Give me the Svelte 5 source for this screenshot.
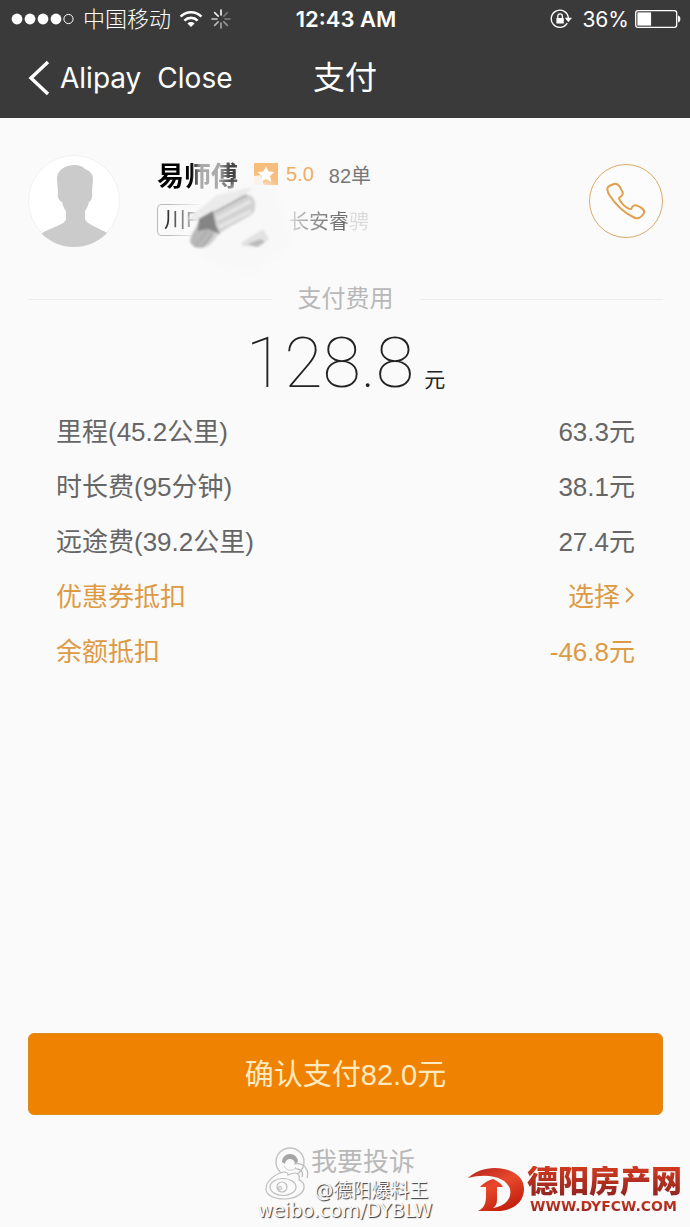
<script lang="ts">
  const carrier = '中国移动';
  const time = '12:43 AM';
  const battery = 36;

  const driver = {
    name: '易师傅',
    rating: '5.0',
    orders: '82单',
    plate: '川F',
    car: '长安睿骋'
  };

  const total = '128.8';
  const fees = [
    { label: '里程(45.2公里)', value: '63.3元' },
    { label: '时长费(95分钟)', value: '38.1元' },
    { label: '远途费(39.2公里)', value: '27.4元' }
  ];

  // Spinner spokes, brightest first
  const spokes = [1, 0.3, 0.35, 0.45, 0.55, 0.65, 0.75, 0.9];
</script>

<div class="page">
  <header>
    <div class="status">
      <div class="status-left">
        <svg width="64" height="12" viewBox="0 0 64 12" aria-hidden="true">
          {#each [0, 1, 2, 3] as i}
            <circle cx={6 + i * 13} cy="6" r="5.4" fill="#fff" />
          {/each}
          <circle cx="57.5" cy="6" r="4.6" fill="none" stroke="#fff" />
        </svg>
        <span class="carrier">{carrier}</span>
        <svg width="24" height="18" viewBox="0 0 24 18" aria-hidden="true">
          <g fill="none" stroke="#fff" stroke-width="2.6">
            <path d="M1.6 6.6a14.6 14.6 0 0 1 20.8 0" />
            <path d="M5.4 10.6a9.4 9.4 0 0 1 13.2 0" />
          </g>
          <path d="M8.4 13.4a5.2 5.2 0 0 1 7.2 0L12 17z" fill="#fff" />
        </svg>
        <svg width="20" height="20" viewBox="0 0 20 20" aria-hidden="true">
          {#each spokes as opacity, i}
            <path
              d="M10 1v5"
              stroke="#fff"
              stroke-width="1.6"
              stroke-linecap="round"
              {opacity}
              transform={`rotate(${i * 45} 10 10)`}
            />
          {/each}
        </svg>
      </div>
      <span class="time">{time}</span>
      <div class="status-right">
        <svg width="22" height="20" viewBox="0 0 22 20" aria-hidden="true">
          <path
            d="M17.2 14.2A8.6 8.6 0 1 1 18.4 9"
            fill="none"
            stroke="#fff"
            stroke-width="1.4"
          />
          <path d="M14.8 8.8h7.2l-3.6 4.4z" fill="#fff" />
          <rect x="6.4" y="9" width="7.4" height="5.6" rx="0.6" fill="#fff" />
          <path d="M7.8 9V7.2a2.3 2.3 0 0 1 4.6 0V9" fill="none" stroke="#fff" stroke-width="1.3" />
        </svg>
        <span class="percent">{battery}%</span>
        <svg width="46" height="18" viewBox="0 0 46 18" aria-hidden="true">
          <rect x="0.7" y="0.7" width="41" height="16.6" rx="2.4" fill="none" stroke="#fff" stroke-width="1.3" />
          <rect x="2.4" y="2.4" width={(38 * battery) / 100} height="13.2" fill="#fff" />
          <path d="M43 5.6c1.6.4 2.4 1.8 2.4 3.4s-.8 3-2.4 3.4z" fill="#fff" />
        </svg>
      </div>
    </div>

    <nav>
      <div class="nav-links">
        <a href="#back" class="back">
          <svg width="22" height="36" viewBox="0 0 22 36" aria-hidden="true">
            <path d="M20 2L3 18l17 16" fill="none" stroke="#fff" stroke-width="3.4" />
          </svg>
          Alipay
        </a>
        <a href="#close">Close</a>
      </div>
      <h1>支付</h1>
    </nav>
  </header>

  <main>
    <section class="driver">
      <svg class="avatar" viewBox="0 0 92 92" aria-hidden="true">
        <clipPath id="round"><circle cx="46" cy="46" r="46" /></clipPath>
        <circle cx="46" cy="46" r="45.5" fill="#fff" stroke="#f1f1f1" />
        <path
          clip-path="url(#round)"
          fill="#cbcbcb"
          d="M47 10c4 0 7 1 10 4 5 2 8 5 8 10l-1 13c1 5-1 9-3 10-1 4-2 6-4 9v8c1 5 12 8 24 15v13H13V79c10-7 24-9 25-15v-8c-2-2-3-5-4-9-3-1-5-5-4-10l-1-13c0-9 8-14 18-14z"
        />
      </svg>

      <div class="info">
        <div class="info-row">
          <span class="name">{driver.name}</span>
          <svg class="star" width="24" height="24" viewBox="0 0 24 24" aria-hidden="true">
            <rect y="1" width="24" height="22" fill="#f7bd7b" />
            <path
              fill="#fff"
              d="M12 4l2.5 5.4 6 .6-4.5 4 1.3 6L12 17l-5.3 3L8 14l-4.5-4 6-.6z"
            />
            <path d="M0 14l7-1 3 11H0z" fill="#fafafa" opacity="0.85" />
          </svg>
          <span class="rating">{driver.rating}</span>
          <span class="orders">{driver.orders}</span>
        </div>
        <div class="info-row">
          <span class="plate">{driver.plate}</span>
          <span class="car">{driver.car}</span>
        </div>
        <svg class="smudge" width="220" height="110" viewBox="0 0 220 110" aria-hidden="true">
          <defs>
            <filter id="soft" x="-20%" y="-20%" width="140%" height="140%">
              <feGaussianBlur stdDeviation="1" />
            </filter>
            <filter id="softer" x="-20%" y="-20%" width="140%" height="140%">
              <feGaussianBlur stdDeviation="5" />
            </filter>
          </defs>
          <path d="M40 45L75 15l40-2 20 60-40 30-50-14z" fill="#f8f8f8" filter="url(#softer)" />
          <path d="M30 48l30-24 36-8-36 34z" fill="#ebebeb" filter="url(#soft)" />
          <g filter="url(#soft)">
            <path d="M33 68c3-16 34-32 53-44 10-3 15 7 11 17-10 10-30 14-39 27-8 12-21 12-25 0z" fill="#d2d2d2" />
            <path d="M33 70l9-20 14-8 3 18-8 12c-6 7-16 6-18-2z" fill="#b8b8b8" />
            <path d="M42 48l14-8 3 15 4 8-12-5-10 2z" fill="#858585" />
            <path d="M60 48l34-18M62 56l32-16" stroke="#e4e4e4" stroke-width="4" />
            <path d="M56 42l34-18M38 76l12-16M45 76l10-12" stroke="#aaa" stroke-width="1.5" />
            <path d="M84 72l22-14 6 10-10 8-16-1z" fill="#e2e2e2" />
            <path d="M90 73l14-5 4 3-8 5z" fill="#bcbcbc" />
          </g>
        </svg>
      </div>

      <button class="call" aria-label="电话">
        <svg width="42" height="42" viewBox="0 0 42 42" aria-hidden="true">
          <path
            fill="none"
            stroke="#dfa050"
            stroke-width="2"
            stroke-linejoin="round"
            d="M3 7c-2 3 0 6 2 9 6 9 14 17 25 22 3 1 6 0 9-5 1-3-1-4-4-6-5-3-7-2-9 2-4 0-11-6-12-11 3-2 5-4 3-7-2-5-4-8-8-7-3 1-5 2-6 3z"
          />
        </svg>
      </button>
    </section>

    <section class="bill">
      <h2>支付费用</h2>
      <p class="total"><span class="amount">{total}</span><span class="unit">元</span></p>
      <dl>
        {#each fees as fee}
          <div class="fee">
            <dt>{fee.label}</dt>
            <dd>{fee.value}</dd>
          </div>
        {/each}
        <div class="fee deduct">
          <dt>优惠券抵扣</dt>
          <dd>
            <a href="#coupon">
              选择
              <svg width="10" height="16" viewBox="0 0 10 16" aria-hidden="true">
                <path d="M1 1l7 7-7 7" fill="none" stroke="currentColor" stroke-width="1.8" />
              </svg>
            </a>
          </dd>
        </div>
        <div class="fee deduct">
          <dt>余额抵扣</dt>
          <dd>-46.8元</dd>
        </div>
      </dl>
    </section>

    <button class="pay">确认支付82.0元</button>
  </main>

  <footer>
    <a href="#complain" class="complain">
      <svg width="30" height="30" viewBox="0 0 30 30" aria-hidden="true">
        <circle cx="15" cy="15" r="14" fill="none" stroke="#c2c2c2" stroke-width="1.4" />
        <path d="M7 15a8 8 0 0 1 16 0l-3 2a5 5 0 0 0-10 0z" fill="#a5a5a5" />
        <path d="M9 19c2 5 9 6 12 1" fill="none" stroke="#d0d0d0" />
      </svg>
      我要投诉
    </a>
    <div class="weibo">
      <span class="handle">@德阳爆料王</span>
      <span>weibo.com/DYBLW</span>
      <svg class="weibo-logo" width="48" height="38" viewBox="0 0 48 38" aria-hidden="true">
        <g fill="none" stroke="#bcbcbc" stroke-width="1.2">
          <path
            fill="#fafafa"
            d="M20 10c-8 1-18 9-18 17 0 6 8 10 18 10 13 0 21-7 20-13 0-4-3-5-5-6 1-4 0-7-4-7-3 0-5 1-7 2 0-2-1-3-4-3z"
          />
          <ellipse cx="19" cy="25" rx="13" ry="8.5" />
          <circle cx="18" cy="25" r="5" />
          <circle cx="16" cy="26" r="1.5" />
          <path d="M30 2c9-2 16 5 13 14M31 7c5-1 9 3 7 8" />
        </g>
      </svg>
    </div>
  </footer>

  <div class="site-mark">
    <svg width="60" height="46" viewBox="0 0 60 46" aria-hidden="true">
      <defs>
        <linearGradient id="flame" x1="0" y1="0" x2="0.6" y2="1">
          <stop offset="0" stop-color="#b3221a" />
          <stop offset="0.5" stop-color="#e8492c" />
          <stop offset="1" stop-color="#c4210f" />
        </linearGradient>
      </defs>
      <path
        fill="url(#flame)"
        d="M1 11C10 2 25-1 37 2c13 3 20 10 20 20 0 14-12 22-27 22H11c5-2 8-7 8-14v-10h-6c4-4 7-6 13-8 4 2 8 4 10 8h-6v13c0 3-1 6-4 8 13-2 19-10 17-19C40 11 22 5 1 11z"
      />
    </svg>
    <div class="site-text">
      <span class="site-name">德阳房产网</span>
      <span class="site-url">WWW.DYFCW.COM</span>
    </div>
  </div>
</div>

<style>
  :global(body) {
    background: #fafafa;
  }

  .page {
    position: relative;
    display: flex;
    flex-direction: column;
    min-height: 100vh;
    background: #fafafa;
    color: #666;
    font-family: 'Liberation Sans', 'Noto Sans CJK SC', sans-serif;
  }

  h1,
  h2,
  p,
  dl,
  dd {
    margin: 0;
  }

  a {
    color: inherit;
    text-decoration: none;
  }

  svg {
    display: block;
    flex: none;
  }

  header {
    background: #3a3a3a;
    color: #fff;
    font-family: Inter, 'Noto Sans CJK SC', sans-serif;
  }

  .status {
    display: grid;
    grid-template-columns: 1fr auto 1fr;
    align-items: center;
    height: 38px;
    padding: 0 9px 0 11px;
  }

  .status-left,
  .status-right {
    display: flex;
    align-items: center;
  }

  .status-left {
    gap: 8px;
  }

  .status-right {
    justify-content: flex-end;
  }

  .carrier {
    font-size: 22px;
    font-weight: 300;
    line-height: 30px;
  }

  .time {
    font-size: 22px;
    font-weight: 600;
  }

  .percent {
    margin: 0 6px 0 10px;
    font-size: 21px;
  }

  nav {
    display: grid;
    grid-template-columns: 1fr auto 1fr;
    align-items: center;
    height: 80px;
    padding: 0 28px;
  }

  .nav-links {
    display: flex;
    align-items: center;
    gap: 16px;
    font-size: 28px;
  }

  .back {
    display: flex;
    align-items: center;
    gap: 10px;
  }

  h1 {
    font-size: 32px;
    font-weight: 400;
    line-height: 44px;
  }

  main {
    display: flex;
    flex: 1;
    flex-direction: column;
    padding: 0 27px 0 28px;
  }

  .driver {
    display: flex;
    align-items: center;
    padding-top: 37px;
  }

  .avatar {
    width: 92px;
    height: 92px;
  }

  .info {
    position: relative;
    display: flex;
    flex: 1;
    flex-direction: column;
    gap: 8px;
    margin-left: 37px;
    padding-bottom: 8px;
  }

  .info-row {
    display: flex;
    align-items: center;
    height: 38px;
    font-size: 20px;
  }

  .name {
    background: linear-gradient(90deg, #000 42%, #aaa 54%, #aaa 76%, #444 90%);
    background-clip: text;
    color: transparent;
    font-size: 27px;
    font-weight: 700;
  }

  .star {
    margin: 0 8px 0 16px;
  }

  .rating {
    color: #f0ae62;
  }

  .orders {
    margin-left: 15px;
    color: #777;
  }

  .plate {
    box-sizing: border-box;
    width: 96px;
    height: 32px;
    padding-left: 6px;
    border: 1px solid #bbb;
    border-radius: 4px;
    color: #333;
    font-size: 22px;
    line-height: 30px;
    mask-image: linear-gradient(90deg, #000 12%, transparent 48%);
  }

  .car {
    margin-left: 36px;
    background: linear-gradient(90deg, #ddd, #999 26%, #666 70%, #d8d8d8 76%, #ddd);
    background-clip: text;
    color: transparent;
  }

  .smudge {
    position: absolute;
    top: 16px;
    left: 0;
  }

  .call {
    display: flex;
    align-items: center;
    justify-content: center;
    width: 74px;
    height: 74px;
    padding: 0;
    border: 1px solid #dcaa68;
    border-radius: 50%;
    background: #fcfcfc;
  }

  .bill h2 {
    display: flex;
    align-items: center;
    gap: 26px;
    padding-top: 34px;
    color: #b8b8b8;
    font-size: 24px;
    font-weight: 400;
    line-height: 36px;
  }

  h2::before,
  h2::after {
    flex: 1;
    height: 1px;
    background: #ededed;
    content: '';
  }

  .total {
    display: flex;
    align-items: baseline;
    justify-content: center;
    gap: 10px;
    height: 85px;
    color: #222;
  }

  .amount {
    font-family: Roboto, sans-serif;
    font-size: 70px;
    font-weight: 100;
    line-height: 92px;
  }

  .unit {
    font-size: 21px;
  }

  dl {
    padding: 0 28px;
    font-size: 26px;
  }

  .fee {
    display: flex;
    align-items: center;
    justify-content: space-between;
    height: 55px;
  }

  .deduct {
    color: #dd9a44;
  }

  .deduct a {
    display: flex;
    align-items: center;
    gap: 5px;
  }

  .pay {
    height: 82px;
    margin-top: auto;
    padding-bottom: 5px;
    border: 1px solid #dc8a22;
    border-radius: 6px;
    background: #ef8200;
    color: #ffeac0;
    font-family: inherit;
    font-size: 29px;
  }

  footer {
    display: flex;
    flex-direction: column;
    align-items: center;
    height: 83px;
    padding-top: 29px;
  }

  .complain {
    display: flex;
    align-items: center;
    gap: 6px;
    color: #b8b8b8;
    font-size: 26px;
    line-height: 36px;
  }

  .weibo {
    position: relative;
    display: flex;
    flex-direction: column;
    align-items: flex-end;
    color: #fafafa;
    font-family: 'DejaVu Sans', 'Noto Sans CJK SC', sans-serif;
    font-size: 19px;
    line-height: 20px;
    text-shadow: 1px 1px 1px #333;
  }

  .handle {
    padding-right: 4px;
  }

  .weibo-logo {
    position: absolute;
    top: -18px;
    left: 6px;
  }

  .site-mark {
    position: absolute;
    right: 8px;
    bottom: 13px;
    display: flex;
    align-items: center;
  }

  .site-text {
    display: flex;
    flex-direction: column;
  }

  .site-name,
  .site-url {
    background: linear-gradient(#d23a20, #8c2420);
    background-clip: text;
    color: transparent;
  }

  .site-name {
    font-size: 31px;
    font-weight: 900;
    line-height: 32px;
  }

  .site-url {
    padding-left: 3px;
    font-family: 'DejaVu Sans', sans-serif;
    font-size: 14px;
    font-weight: 700;
    line-height: 16px;
  }
</style>
